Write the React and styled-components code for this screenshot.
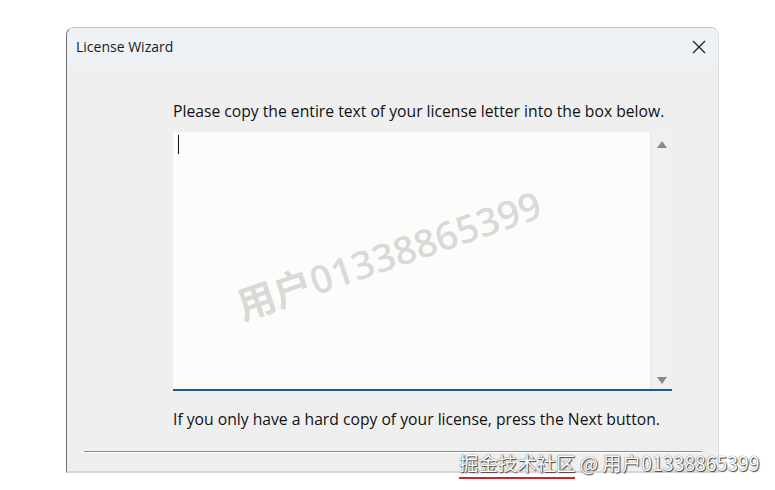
import styled, { createGlobalStyle } from "styled-components";

const GlobalStyle = createGlobalStyle`
  html, body {
    margin: 0;
    padding: 0;
    background: #ffffff;
  }
  body {
    font-family: "Open Sans", "Noto Sans", "Noto Sans CJK SC", sans-serif;
  }
`;

const Page = styled.div`
  position: relative;
  width: 775px;
  height: 490px;
  overflow: hidden;
  padding: 27px 0 0 66px;
  box-sizing: border-box;
`;

const Window = styled.div`
  position: relative;
  width: 653px;
  height: 446px;
  box-sizing: border-box;
  background: #efefef;
  border-left: 1px solid #6e6e6e;
  border-top: 1px solid #b9c6d3;
  border-right: 1px solid #dcdfe2;
  border-bottom: 2px solid #d6d6d6;
  border-radius: 8px 8px 0 0;
  overflow: hidden;
  display: flex;
  flex-direction: column;
`;

const TitleBar = styled.div`
  height: 37px;
  background: #eef2f6;
  display: flex;
  align-items: center;
  justify-content: space-between;
  padding: 0 12px 0 9px;
  flex-shrink: 0;
`;

const Title = styled.span`
  font-size: 14px;
  color: #1a1a1a;
`;

const Close = styled.svg`
  width: 14px;
  height: 14px;
`;

const Body = styled.div`
  display: flex;
  flex-direction: column;
  padding: 36px 46px 0 106px;
`;

const Text = styled.p`
  margin: 0;
  font-size: 15.7px;
  line-height: 21px;
  color: #111;
  white-space: nowrap;
`;

const Box = styled.div`
  margin-top: 10px;
  height: 259px;
  width: 499px;
  box-sizing: border-box;
  background: #fcfcfa;
  border-bottom: 2px solid #1f5a96;
  display: flex;
`;

const Field = styled.div`
  flex: 1;
  padding: 3px 0 0 5px;
`;

const Caret = styled.div`
  width: 1px;
  height: 19px;
  background: #111;
`;

const ScrollBar = styled.div`
  width: 21px;
  background: #f0f0f0;
  border-left: 1px solid #e6e6e6;
  display: flex;
  flex-direction: column;
  justify-content: space-between;
  align-items: center;
  padding: 9px 0 5px;
`;

const Arrow = styled.div`
  width: 0;
  height: 0;
  border-left: 5px solid transparent;
  border-right: 5px solid transparent;
  ${(p) =>
    p.$down
      ? "border-top: 7px solid #8a8a8a;"
      : "border-bottom: 7px solid #8a8a8a;"}
`;

const Footer = styled(Text)`
  margin-top: 18px;
`;

const Separator = styled.div`
  margin: 21px 16px 0 17px;
  height: 1px;
  background: #8c8c8c;
  border-bottom: 1px solid #ffffff;
`;

const Watermark = styled.div`
  position: absolute;
  left: 228px;
  top: 278px;
  font-size: 38.5px;
  font-weight: 600;
  font-family: "Open Sans", "Noto Sans CJK SC", sans-serif;
  color: rgba(140, 140, 140, 0.32);
  transform: rotate(-19deg);
  transform-origin: left top;
  white-space: nowrap;
  pointer-events: none;
`;

const Credit = styled.div`
  position: absolute;
  left: 459px;
  top: 448px;
  font-size: 19.4px;
  font-family: "Noto Sans CJK SC", "Noto Sans", sans-serif;
  color: #ffffff;
  text-shadow: 0 0 1px #333, 1px 1px 1px #444;
  white-space: nowrap;
`;

const Brand = styled.span`
  border-bottom: 2px solid #d2232a;
`;

export default function App() {
  return (
    <>
      <GlobalStyle />
      <Page>
        <Window>
          <TitleBar>
            <Title>License Wizard</Title>
            <Close viewBox="0 0 14 14">
              <path d="M1 1 L13 13 M13 1 L1 13" stroke="#222" strokeWidth="1.3" />
            </Close>
          </TitleBar>
          <Body>
            <Text>Please copy the entire text of your license letter into the box below.</Text>
            <Box>
              <Field>
                <Caret />
              </Field>
              <ScrollBar>
                <Arrow />
                <Arrow $down />
              </ScrollBar>
            </Box>
            <Footer>If you only have a hard copy of your license, press the Next button.</Footer>
          </Body>
          <Separator />
        </Window>
        <Watermark>用户01338865399</Watermark>
        <Credit>
          <Brand>掘金技术社区</Brand> @ 用户01338865399
        </Credit>
      </Page>
    </>
  );
}
